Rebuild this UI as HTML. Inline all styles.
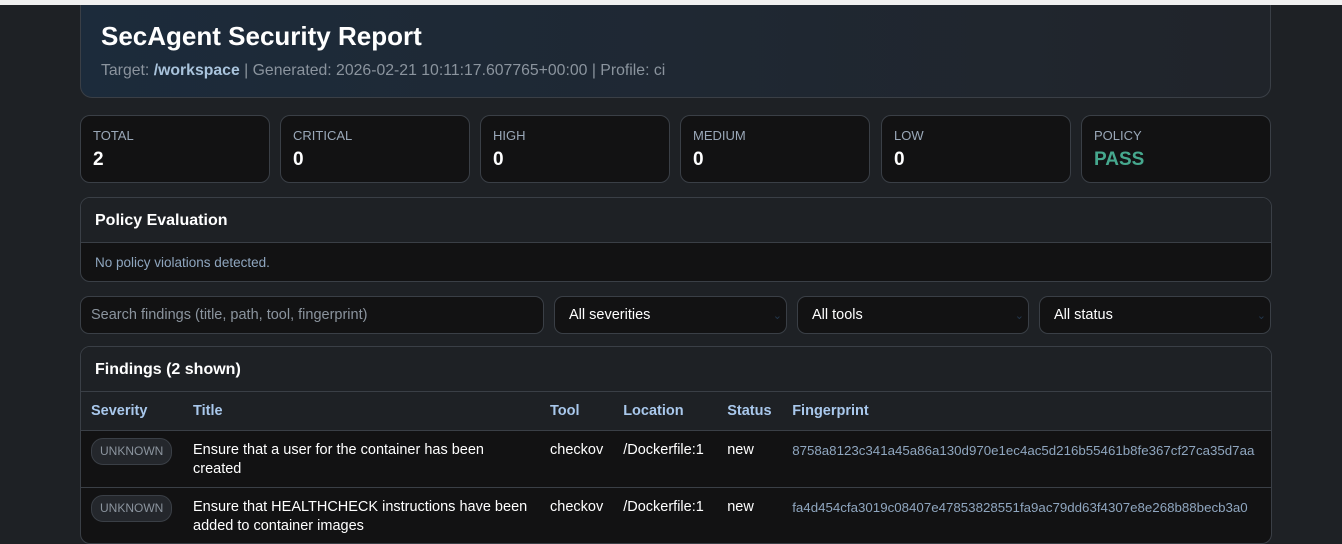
<!DOCTYPE html>
<html><head><meta charset="utf-8"><style>
*{box-sizing:border-box;margin:0;padding:0}
html,body{width:1342px;height:544px;overflow:hidden}
body{background:#1e2125;font-family:"Liberation Sans",sans-serif;color:#e6edf3;position:relative}
.topbar{position:absolute;left:0;top:0;width:1342px;height:5px;background:#f0f0f0;z-index:5}
.hdr{position:absolute;left:80px;top:-10px;width:1191px;height:108px;border:1px solid #3a3f46;border-radius:12px;background:linear-gradient(90deg,#1c2b3b 0%,#1f2833 50%,#20242a 100%)}
.hdr h1{position:absolute;left:20px;top:30px;font-size:26px;font-weight:bold;color:#fff}
.hdr .meta{position:absolute;left:20px;top:71px;font-size:15.8px;color:#8b949e}
.hdr .meta b{color:#a9c3dc}
.stat{position:absolute;top:115px;width:190px;height:68px;border:1px solid #3a3f46;border-radius:10px;background:#121213}
.stat .l{position:absolute;left:12px;top:12px;font-size:13px;color:#9aa8b8}
.stat .v{position:absolute;left:12px;top:33px;font-size:19px;font-weight:bold;color:#fff}
.panel{position:absolute;left:80px;width:1192px;border:1px solid #3a3f46;border-radius:10px;overflow:hidden;background:#121213}
.ph{height:45px;background:#1e2125;border-bottom:1px solid #3a3f46;padding:14px 14px;font-size:16px;font-weight:bold;color:#fff}
.pol .pb{padding:12px 14px;font-size:13.5px;color:#8fa6bf}
.inp{position:absolute;top:296px;height:38px;border:1px solid #3a3f46;border-radius:9px;background:#121213;font-size:14.5px;padding:10px 14px;color:#fff}
.inp.s{color:#8b949e;padding-left:10px}
.inp .c{position:absolute;right:4px;top:12px;color:#24384d;font-size:11px}
table{border-collapse:collapse;width:100%;font-size:14.5px}
th{height:38px;background:#1e2125;text-align:left;color:#a9c8ec;font-weight:bold;border-bottom:1px solid #3a3f46;padding:0 10px}
td{height:57px;vertical-align:top;padding:10px 10px 0;color:#fff;border-bottom:1px solid #3a3f46;line-height:19px}
tr:last-child td{border-bottom:none}
.badge{display:inline-block;border:1px solid #3a3f46;border-radius:12px;background:#24272c;color:#8b949e;font-size:12px;padding:3px 8px;margin-top:-3px}
.fp{font-size:13.3px;color:#8fa6bf}
</style></head><body>
<div class="topbar"></div>
<div class="hdr"><h1>SecAgent Security Report</h1><div class="meta">Target: <b>/workspace</b> | Generated: 2026-02-21 10:11:17.607765+00:00 | Profile: ci</div></div>
<div class="stat" style="left:80px"><div class="l">TOTAL</div><div class="v">2</div></div>
<div class="stat" style="left:280px"><div class="l">CRITICAL</div><div class="v">0</div></div>
<div class="stat" style="left:480px"><div class="l">HIGH</div><div class="v">0</div></div>
<div class="stat" style="left:680px"><div class="l">MEDIUM</div><div class="v">0</div></div>
<div class="stat" style="left:881px"><div class="l">LOW</div><div class="v">0</div></div>
<div class="stat" style="left:1081px"><div class="l">POLICY</div><div class="v" style="color:#46a88e">PASS</div></div>
<div class="panel pol" style="top:197px;height:85px"><div class="ph">Policy Evaluation</div><div class="pb">No policy violations detected.</div></div>
<div class="inp s" style="left:80px;width:464px">Search findings (title, path, tool, fingerprint)</div>
<div class="inp" style="left:554px;width:233px">All severities<span class="c">⌄</span></div>
<div class="inp" style="left:797px;width:232px">All tools<span class="c">⌄</span></div>
<div class="inp" style="left:1039px;width:232px">All status<span class="c">⌄</span></div>
<div class="panel" style="top:346px;height:198px"><div class="ph">Findings (2 shown)</div>
<table><tr><th style="width:102px">Severity</th><th style="width:357px">Title</th><th style="width:73px">Tool</th><th style="width:104px">Location</th><th style="width:65px">Status</th><th>Fingerprint</th></tr>
<tr><td><span class="badge">UNKNOWN</span></td><td>Ensure that a user for the container has been created</td><td>checkov</td><td>/Dockerfile:1</td><td>new</td><td class="fp">8758a8123c341a45a86a130d970e1ec4ac5d216b55461b8fe367cf27ca35d7aa</td></tr>
<tr><td><span class="badge">UNKNOWN</span></td><td>Ensure that HEALTHCHECK instructions have been added to container images</td><td>checkov</td><td>/Dockerfile:1</td><td>new</td><td class="fp">fa4d454cfa3019c08407e47853828551fa9ac79dd63f4307e8e268b88becb3a0</td></tr>
</table></div>
</body></html>
